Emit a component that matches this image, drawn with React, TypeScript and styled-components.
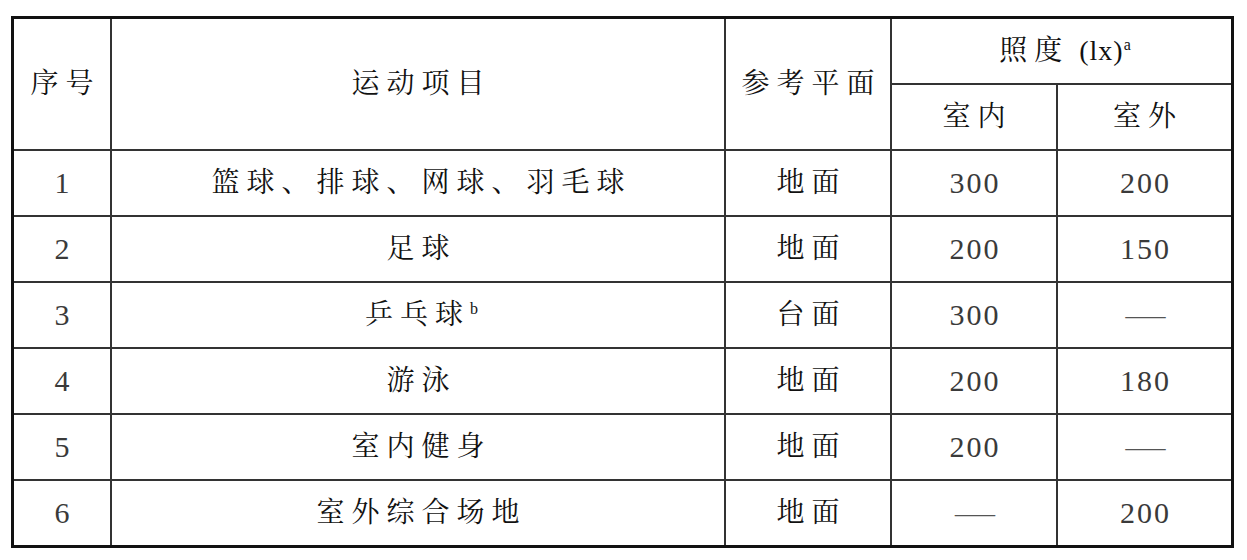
import React from 'react';
import styled, { createGlobalStyle } from 'styled-components';

const GlobalStyle = createGlobalStyle`
  html, body {
    margin: 0;
    padding: 0;
    background: #ffffff;
  }
  body {
    font-family: "Liberation Serif", "Noto Serif CJK SC", "Noto Sans CJK SC", serif;
    color: #111111;
  }
`;

const Page = styled.div`
  padding: 16px 0 0 11px;
  width: 1247px;
  height: 560px;
  box-sizing: border-box;
`;

const Table = styled.div`
  display: grid;
  grid-template-columns: 96px 612px 164px 164px 173px;
  grid-auto-rows: 64px;
  gap: 2px;
  width: fit-content;
  background: #333333;
  border: 3px solid #111111;
`;

const Cell = styled.div<{ $col?: string; $row?: string; $num?: boolean }>`
  background: #ffffff;
  display: flex;
  align-items: center;
  justify-content: center;
  font-size: ${(p) => (p.$num ? '30px' : '28px')};
  line-height: 1;
  letter-spacing: ${(p) => (p.$num ? '2px' : '7px')};
  padding-left: ${(p) => (p.$num ? '2px' : '7px')};
  font-weight: 400;
  color: ${(p) => (p.$num ? '#3a3a3a' : '#111111')};
  ${(p) => (p.$col ? `grid-column: ${p.$col};` : '')}
  ${(p) => (p.$row ? `grid-row: ${p.$row};` : '')}
`;

const Digits = styled.span`
  font-family: "Liberation Serif", serif;
`;

const Sup = styled.span`
  font-family: "Liberation Serif", serif;
  font-size: 16px;
  letter-spacing: 0;
  align-self: flex-start;
  margin-top: 18px;
  margin-left: 0;
`;

const Latin = styled.span`
  font-family: "Liberation Serif", serif;
  letter-spacing: 1px;
  margin-left: 10px;
`;

const Dash = styled.span`
  font-family: "Liberation Serif", serif;
  font-size: 40px;
  letter-spacing: 0;
  color: #555555;
  transform: scaleY(0.6);
`;

type Row = {
  no: string;
  name: string;
  note?: string;
  plane: string;
  indoor: string;
  outdoor: string;
};

const rows: Row[] = [
  { no: '1', name: '篮球、排球、网球、羽毛球', plane: '地面', indoor: '300', outdoor: '200' },
  { no: '2', name: '足球', plane: '地面', indoor: '200', outdoor: '150' },
  { no: '3', name: '乒乓球', note: 'b', plane: '台面', indoor: '300', outdoor: '—' },
  { no: '4', name: '游泳', plane: '地面', indoor: '200', outdoor: '180' },
  { no: '5', name: '室内健身', plane: '地面', indoor: '200', outdoor: '—' },
  { no: '6', name: '室外综合场地', plane: '地面', indoor: '—', outdoor: '200' },
];

const Value = ({ v }: { v: string }) =>
  v === '—' ? (
    <Cell $num><Dash>—</Dash></Cell>
  ) : (
    <Cell $num><Digits>{v}</Digits></Cell>
  );

export default function App() {
  return (
    <Page>
      <GlobalStyle />
      <Table>
        <Cell $row="1 / 3" $col="1">序号</Cell>
        <Cell $row="1 / 3" $col="2">运动项目</Cell>
        <Cell $row="1 / 3" $col="3">参考平面</Cell>
        <Cell $row="1" $col="4 / 6">
          照度<Latin>(lx)</Latin><Sup>a</Sup>
        </Cell>
        <Cell $row="2" $col="4">室内</Cell>
        <Cell $row="2" $col="5">室外</Cell>
        {rows.map((r) => (
          <React.Fragment key={r.no}>
            <Value v={r.no} />
            <Cell>
              {r.name}
              {r.note && <Sup>{r.note}</Sup>}
            </Cell>
            <Cell>{r.plane}</Cell>
            <Value v={r.indoor} />
            <Value v={r.outdoor} />
          </React.Fragment>
        ))}
      </Table>
    </Page>
  );
}
